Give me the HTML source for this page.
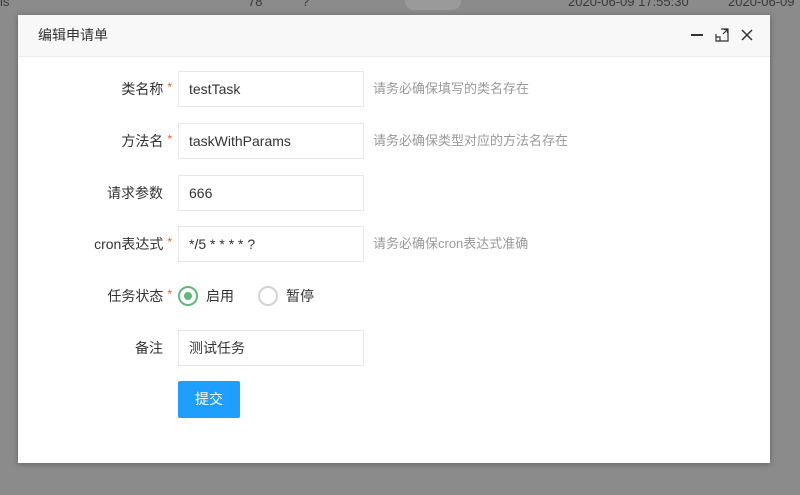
<html><head><style>
body{margin:0;width:800px;height:495px;background:#8b8b8b;font-family:"Liberation Sans","Noto Sans CJK SC",sans-serif;font-size:14px;color:#333;position:relative;overflow:hidden}
.bg{position:absolute;color:#3a3a3a;font-size:13px;top:-6px}
.dlg{position:absolute;left:18px;top:15px;width:752px;height:448px;background:#fff;box-shadow:0 1px 6px rgba(0,0,0,.3)}
.hd{height:41px;background:#f8f8f8;border-bottom:1px solid #eee;line-height:41px;padding-left:20px;color:#333}
.row{position:absolute;left:0;height:36px;width:700px}
.lbl{position:absolute;right:546px;top:0;line-height:36px;white-space:nowrap;color:#333}
.lbl i{color:#ff5722;font-style:normal;font-size:12px;position:relative;top:-3px;margin-left:4px}
.inp{position:absolute;left:160px;top:0;height:34px;border:1px solid #e6e6e6;line-height:34px;padding-left:10px;box-sizing:content-box;width:174px}
.tip{position:absolute;left:355px;line-height:36px;color:#999;font-size:13px}
.ico{position:absolute;top:13px}
</style></head><body>
<div class="bg" style="left:0">is</div><div class="bg" style="left:248px">78</div><div class="bg" style="left:302px">?</div>
<div class="bg" style="left:405px;width:56px;height:18px;border-radius:10px;background:#9a9a9a;top:-8px"></div>
<div class="bg" style="left:568px">2020-06-09 17:55:30</div><div class="bg" style="left:728px">2020-06-09</div>
<div class="dlg">
<div class="hd">编辑申请单</div>
<svg class="ico" style="left:672px" width="14" height="14"><path d="M1 7H13" stroke="#333" stroke-width="2"/></svg>
<svg class="ico" style="left:697px" width="14" height="14" fill="none" stroke="#333" stroke-width="1.2"><path d="M6 1H13V13H1V6M8 6L12.5 1.5M9 1.5H12.5V5M1 9H5V13"/></svg>
<svg class="ico" style="left:722px" width="14" height="14"><path d="M2 2L12 12M12 2L2 12" stroke="#333" stroke-width="1.5"/></svg>
<div class="row" style="top:56px"><div class="lbl">类名称<i>*</i></div><div class="inp">testTask</div><div class="tip">请务必确保填写的类名存在</div></div>
<div class="row" style="top:108px"><div class="lbl">方法名<i>*</i></div><div class="inp">taskWithParams</div><div class="tip">请务必确保类型对应的方法名存在</div></div>
<div class="row" style="top:160px"><div class="lbl" style="right:555px">请求参数</div><div class="inp">666</div></div>
<div class="row" style="top:211px"><div class="lbl">cron表达式<i>*</i></div><div class="inp">*/5 * * * * ?</div><div class="tip">请务必确保cron表达式准确</div></div>
<div class="row" style="top:263px"><div class="lbl">任务状态<i>*</i></div>
<div style="position:absolute;left:160px;top:8px;width:16px;height:16px;border:2px solid #5fb878;border-radius:50%"><div style="margin:4px;width:8px;height:8px;border-radius:50%;background:#5fb878"></div></div>
<div style="position:absolute;left:188px;line-height:36px">启用</div>
<div style="position:absolute;left:240px;top:8px;width:16px;height:16px;border:2px solid #d2d2d2;border-radius:50%"></div>
<div style="position:absolute;left:268px;line-height:36px">暂停</div></div>
<div class="row" style="top:315px"><div class="lbl" style="right:555px">备注</div><div class="inp">测试任务</div></div>
<div style="position:absolute;left:160px;top:366px;width:62px;height:37px;background:#1e9fff;color:#fff;line-height:37px;text-align:center;border-radius:2px">提交</div>
</div>
</body></html>
